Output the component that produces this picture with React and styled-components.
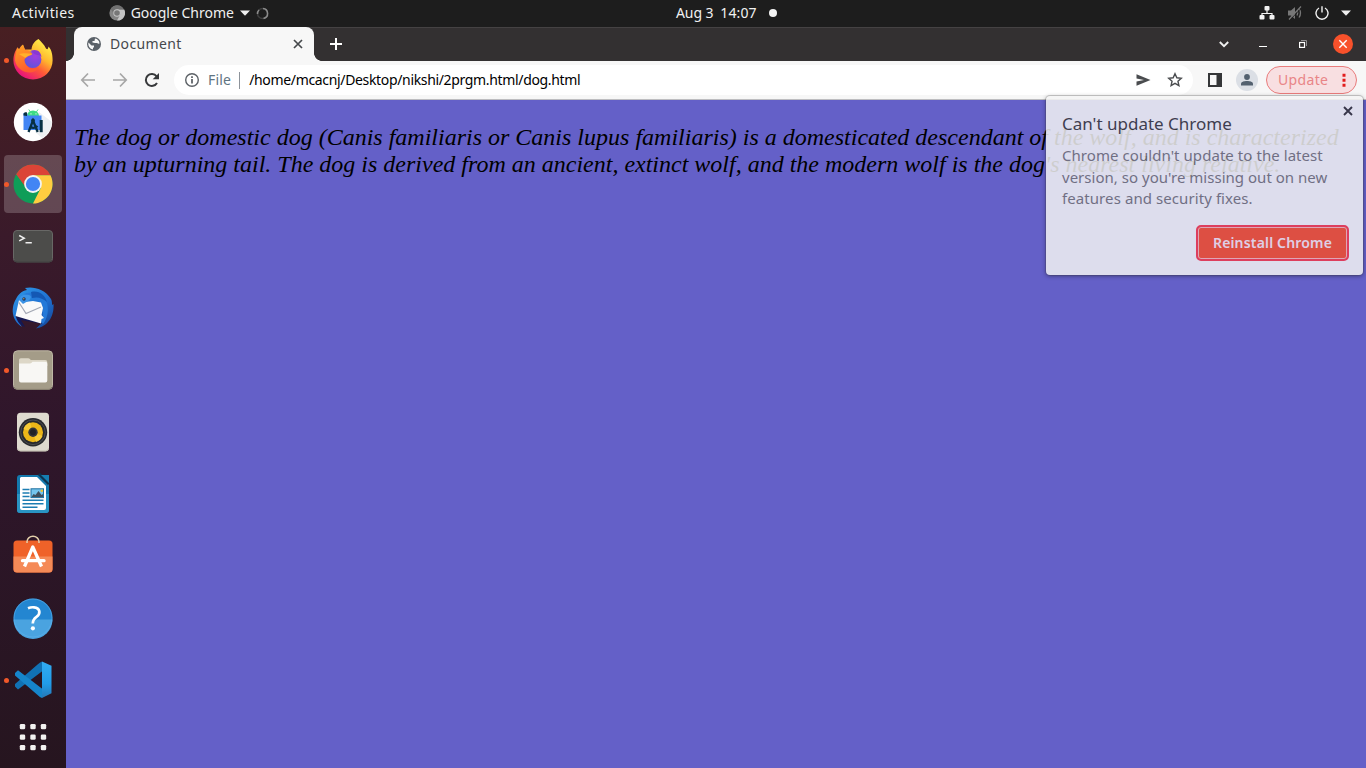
import React from 'react';
import styled, { createGlobalStyle } from 'styled-components';

const GlobalStyle = createGlobalStyle`
  * { box-sizing: border-box; }
  body { margin: 0; overflow: hidden; background: #1d1d1d; }
`;

const Desktop = styled.div`
  width: 1366px;
  height: 768px;
  display: grid;
  grid-template-rows: 27px 1fr;
  grid-template-columns: 66px 1fr;
  font-family: "Noto Sans", "Open Sans", sans-serif;
  font-size: 14px;
`;

const Icon = styled.svg`
  display: block;
  flex: none;
  width: ${(p) => p.$w}px;
  height: ${(p) => p.$h || p.$w}px;
`;

/* ---------- top panel ---------- */
const TopPanel = styled.header`
  grid-column: 1 / -1;
  display: grid;
  grid-template-columns: 676px auto 1fr;
  padding-bottom: 1px;
  background: #1d1d1d;
  color: #f0f0f0;
  line-height: 26px;
  white-space: nowrap;
`;
const PanelLeft = styled.div`
  display: flex;
  align-items: center;
  padding-left: 12px;
`;
const PanelLabel = styled.span`
  letter-spacing: ${(p) => p.$track || 0}px;
`;
const AppMenu = styled.div`
  display: flex;
  align-items: center;
  gap: 6px;
  margin-left: 34px;
`;
const Clock = styled.div`
  display: flex;
  align-items: center;
  gap: 7px;
`;
const NotifyDot = styled.i`
  width: 8px;
  height: 8px;
  margin-left: 5px;
  border-radius: 50%;
  background: #f4f4f4;
`;
const PanelRight = styled.div`
  display: flex;
  align-items: center;
  justify-content: flex-end;
  padding-right: 15px;
`;
const StatusSlot = styled.div`
  margin-left: ${(p) => p.$gap}px;
`;

/* ---------- dock ---------- */
const DockBar = styled.nav`
  display: flex;
  flex-direction: column;
  gap: 4px;
  padding: 4px 4px 0;
  background: linear-gradient(#481f22 0%, #3a1a2a 28%, #2f162b 55%, #26151f 100%);
`;
const DockItem = styled.div`
  display: flex;
  align-items: center;
  justify-content: flex-start;
  height: 58px;
  flex: none;
  border-radius: 4px;
  background: ${(p) => (p.$active ? 'rgba(255,255,255,0.2)' : 'transparent')};
  margin-top: ${(p) => p.$shift || 0}px;
`;
const RunningDot = styled.i`
  width: 5px;
  height: 5px;
  flex: none;
  border-radius: 50%;
  background: ${(p) => (p.$on ? '#f1582a' : 'transparent')};
`;
const DockIcon = styled(Icon)`
  margin-left: 2px;
`;

/* ---------- browser ---------- */
const BrowserWindow = styled.main`
  position: relative;
  display: grid;
  grid-template-rows: 34px 39px 1fr;
  min-width: 0;
`;
const TabStrip = styled.div`
  display: flex;
  align-items: flex-end;
  justify-content: space-between;
  background: #333031;
  box-shadow: inset 0 1px #454243;
`;
const TabGroup = styled.div`
  display: flex;
  align-items: center;
`;
const TabFoot = styled.div`
  width: 8px;
  height: 34px;
  background: radial-gradient(circle at ${(p) => (p.$right ? '100%' : '0')} 0, transparent 7.6px, #f7f7f7 8.2px) no-repeat 0 26px / 8px 8px;
`;
const Tab = styled.div`
  display: flex;
  align-items: center;
  width: 240px;
  height: 34px;
  padding: 0 11px 0 13px;
  border-radius: 8px 8px 0 0;
  background: #f7f7f7;
  color: #45484c;
`;
const TabTitle = styled.span`
  flex: 1;
  margin-left: 9px;
  padding-bottom: 1px;
  letter-spacing: 0.37px;
`;
const WindowControls = styled.div`
  display: flex;
  align-items: center;
  height: 34px;
  padding-right: 13px;
`;
const ControlSlot = styled.div`
  margin-left: ${(p) => p.$gap}px;
`;
const Toolbar = styled.div`
  display: flex;
  align-items: center;
  padding: 0 9px 0 14px;
  background: #f7f7f7;
  border-bottom: 1px solid #bdbdc0;
`;
const NavButtons = styled.div`
  display: flex;
  gap: 16px;
  margin-right: 14px;
`;
const Omnibox = styled.div`
  display: flex;
  align-items: center;
  flex: 1;
  height: 30px;
  padding: 0 10px;
  border-radius: 15px;
  background: #fff;
  white-space: nowrap;
`;
const Scheme = styled.span`
  margin-left: 8px;
  padding-right: 8px;
  border-right: 1px solid #8d939a;
  line-height: 16px;
  padding-bottom: 1px;
  letter-spacing: 0.2px;
  color: #5f7482;
`;
const Address = styled.span`
  flex: 1;
  margin-left: 9px;
  padding-bottom: 1px;
  letter-spacing: -0.34px;
  color: #000;
`;
const OmniActions = styled.div`
  display: flex;
  gap: 16px;
`;
const Avatar = styled.div`
  display: grid;
  place-items: center;
  width: 22px;
  height: 22px;
  margin: 0 8px 0 14px;
  border-radius: 50%;
  background: #dbdfe5;
`;
const UpdateChip = styled.div`
  display: flex;
  align-items: center;
  justify-content: space-between;
  width: 91px;
  height: 28px;
  padding: 0 10px 1px 11px;
  border: 1px solid #e97c7c;
  border-radius: 14px;
  background: #f8dfe1;
  color: #e98587;
  letter-spacing: 0.35px;
`;
const Page = styled.section`
  background: #6460c8;
  padding: 0 8px;
`;
const Paragraph = styled.p`
  margin: 24px 0 0;
  font: italic 24px/27px "Liberation Serif", serif;
  color: #000;
  white-space: nowrap;
`;

/* ---------- update bubble ---------- */
const Bubble = styled.aside`
  position: absolute;
  top: 69px;
  left: 980px;
  width: 317px;
  height: 179px;
  padding: 17px 14px 0 16px;
  border-radius: 4px;
  background: #f5f5f5;
  box-shadow: 0 0 0 1px rgba(60, 60, 60, 0.25), 0 1px 4px rgba(0, 0, 0, 0.5);
  opacity: 0.84;
  display: flex;
  flex-direction: column;
  white-space: nowrap;
`;
const BubbleTitle = styled.h2`
  margin: 0 0 10px;
  font-size: 17px;
  font-weight: 400;
  line-height: 22px;
  color: #383838;
`;
const BubbleLine = styled.div`
  font-size: 15px;
  line-height: 21.7px;
  letter-spacing: ${(p) => p.$track}px;
  color: #737377;
`;
const ReinstallButton = styled.button`
  align-self: flex-end;
  width: 153px;
  height: 36px;
  margin-top: 15px;
  padding: 0;
  border: 2px solid #f5384a;
  border-radius: 5px;
  background: #f54c2a;
  box-shadow: inset 0 0 0 1px #f7b3b3;
  color: #f6e4ec;
  font: 600 14px/30px "Noto Sans", sans-serif;
  letter-spacing: 0.17px;
`;
const BubbleClose = styled.div`
  position: absolute;
  top: 10px;
  right: 10px;
`;

/* ---------- dock drawings, on a 44-unit canvas ---------- */
const Firefox = () => (
  <DockIcon $w={44} viewBox="0 0 44 44">
    <defs>
      <linearGradient id="ffBody" x1=".85" y1=".1" x2=".25" y2=".95">
        <stop offset="0" stopColor="#fff14a" /><stop offset=".35" stopColor="#ffb72e" />
        <stop offset=".62" stopColor="#ff5a36" /><stop offset="1" stopColor="#e8127c" />
      </linearGradient>
      <radialGradient id="ffGlobe" cx=".65" cy=".3" r=".75">
        <stop offset="0" stopColor="#a43bdf" /><stop offset="1" stopColor="#5c55dc" />
      </radialGradient>
      <linearGradient id="ffHead" x1="0" y1="0" x2=".3" y2="1">
        <stop offset="0" stopColor="#ffa522" /><stop offset="1" stopColor="#ff5b30" />
      </linearGradient>
    </defs>
    <path d="M27.500 1C30 4 33 6 35 10.500C36.500 12 37 11 37.500 8.500C41 12 41.700 18 41.600 22.500A19.600 19 0 0 1 2.400 22.500C2.400 16 4.500 13 6.500 9L7.500 12C9 10 9.500 8 12 6.500L14 11.500L20.500 11.500C21 7 23 3.500 27.500 1Z" fill="url(#ffBody)" />
    <circle cx="21.800" cy="21.500" r="8.600" fill="url(#ffGlobe)" />
    <path d="M6.500 10L8.500 11L12 7L14 12C17 11.500 19 13.500 20 14.500C22 15.500 21.500 17 17.500 18C15.500 19 14 20 13.300 22C14 29 21 33 28 29.500C22 39 6 34 4 22.500C4 18 5 14 6.500 10Z" fill="url(#ffHead)" />
    <path d="M8 16C11 15 17 15 21.500 16C19 17.500 16 18 15 19.500C13.500 20 13.500 19 12 18.500Z" fill="#ffb12b" />
    <path d="M20 12.500C26 10.500 30 13.500 30.500 19C28.500 16.500 26.500 17.500 23.500 16C22.500 15 21.500 14 20 12.500Z" fill="#8a38d2" />
  </DockIcon>
);
const AndroidStudio = () => (
  <DockIcon $w={44} viewBox="0 0 44 44">
    <circle cx="22" cy="22" r="19.200" fill="#fff" />
    <path d="M28 12L41 22A19 19 0 0 1 31 38L24 32Z" fill="#edf0f2" />
    <path d="M16 16a6 5.600 0 0 1 12 0Z" fill="#3ddc84" />
    <path d="M17.800 9.500l2 3M27 9.500l-2 3" stroke="#3ddc84" strokeWidth=".9" />
    <circle cx="20" cy="13.800" r=".6" fill="#fff" /><circle cx="25" cy="13.800" r=".6" fill="#fff" />
    <path d="M12.500 13L16 13l1 2.500H30.500V30H12.500Z" fill="#4285f4" />
    <path d="M12.500 14C13 11.800 15 12 16 12.500V16L12.500 15.500Z" fill="#073042" />
    <path d="M17.500 32L22 20.500L26.700 32M18.500 26.500Q23 29.500 26.500 26" fill="none" stroke="#073042" strokeWidth="2.300" />
    <circle cx="22" cy="20.500" r="1.900" fill="#073042" /><path d="M28.700 20h3v12.200h-3z" fill="#073042" />
  </DockIcon>
);
const Chrome = () => (
  <DockIcon $w={44} viewBox="0 0 44 44">
    <circle cx="22" cy="22" r="19.500" fill="#0f9d58" />
    <path d="M22 22L14.500 25L5.113 12.250A19.500 19.500 0 0 1 39.500 13.300H22Z" fill="#db4437" />
    <path d="M22 41.500A19.500 19.500 0 0 0 39.500 13.300H22L29.700 26.300Z" fill="#ffcd40" />
    <circle cx="22" cy="22" r="8.900" fill="#f3f3f3" />
    <circle cx="22" cy="22" r="7.100" fill="#4285f4" />
  </DockIcon>
);
const Terminal = () => (
  <DockIcon $w={44} viewBox="0 0 44 44">
    <rect x="2.500" y="6.500" width="39" height="31.500" rx="3.500" fill="#4c4c4a" stroke="#686866" />
    <path d="M3 36.500q1 1.500 3 1.500h32q2 0 3-1.500" fill="none" stroke="#333" />
    <path d="M8.200 11.500l5 2.700l-5 2.700M14.500 18.700h6.300" fill="none" stroke="#f0f0f0" strokeWidth="1.500" />
  </DockIcon>
);
const Thunderbird = () => (
  <DockIcon $w={44} viewBox="0 0 44 44">
    <defs>
      <linearGradient id="tb" x1="0" y1="0" x2=".8" y2="1">
        <stop offset="0" stopColor="#2f9bea" /><stop offset=".6" stopColor="#1f6fd0" /><stop offset="1" stopColor="#164a9c" />
      </linearGradient>
    </defs>
    <path d="M5 13C0 21 0 34 11 41C9 38 8 36 9 33L31 37L25 42.500C36 41 43.500 31 42.500 18L41 19C41 17 41 15 40 13C34 3 22 0 14 2L16 4C10 5 7 9 5 13Z" fill="url(#tb)" />
    <path d="M4.500 29C6 36 9 39 14 41L10 34L32 38Q28 38 25 33Z" fill="#151852" />
    <path d="M13 8C20 5 31 8 35 15C39 23 36 33 32 38L28 33L32 30L31 17Z" fill="#2479d8" />
    <path d="M8 14L4.500 30L30 37.500L30.500 33L33 32L30.500 29L32 22L30 16.500L22 15L14 16Z" fill="#fafafa" />
    <path d="M8 16.500L15 27.500L30 21" fill="none" stroke="#a3a8b4" strokeWidth="1.200" />
    <path d="M8 14C9 9.500 13 8 18 9C21 10 20 13 17 15L12 18Z" fill="#3b93e6" />
    <path d="M20 6C28 4 34 9 36 16C31 12 27 10.500 21 12Z" fill="#1458b4" />
    <circle cx="13" cy="13" r="1.700" fill="#173461" /><circle cx="12.800" cy="12.800" r=".7" fill="#c89b50" />
  </DockIcon>
);
const Files = () => (
  <DockIcon $w={44} viewBox="0 0 44 44">
    <rect x="2.500" y="2.800" width="39" height="38.500" rx="4" fill="#a49c88" stroke="#beb7a5" />
    <path d="M3 39q1 2.300 3.500 2.300h31q2.500 0 3.500-2.300" fill="none" stroke="#817a68" />
    <path d="M8 12a1.800 1.800 0 0 1 1.800-1.800h7.500q1.500 0 2.500 1.700h14.500a2 2 0 0 1 2 2V18H8Z" fill="#ddd7c7" />
    <path d="M8 15.500h11q1.500 0 2.500-1.800h12.800a2 2 0 0 1 2 2v16.800a2 2 0 0 1-2 2H10a2 2 0 0 1-2-2Z" fill="#f8f7f4" />
  </DockIcon>
);
const Rhythmbox = () => (
  <DockIcon $w={44} viewBox="0 0 44 44">
    <rect x="6" y="2.800" width="32" height="38.500" rx="3.500" fill="#dedacf" />
    <path d="M6.500 39q1 2 3 2h25q2 0 3-2" fill="none" stroke="#bdb8ab" />
    <circle cx="22" cy="22.300" r="14.200" fill="#282a2e" />
    <circle cx="22" cy="22.300" r="12.300" fill="none" stroke="#4c4e52" strokeWidth="1" />
    <circle cx="22" cy="22.300" r="10" fill="#ecb718" />
    <path d="M22 22.300L12.500 19A10 10 0 0 1 19 12.500ZM22 22.300L31.500 26A10 10 0 0 1 25 32Z" fill="#f6ca35" />
    <circle cx="22" cy="22.300" r="4.700" fill="#34363a" /><circle cx="22" cy="22.300" r="3" fill="#202226" />
  </DockIcon>
);
const Writer = () => (
  <DockIcon $w={44} viewBox="0 0 44 44">
    <path d="M9 3H28L38 11V38a3 3 0 0 1-3 3H9a3 3 0 0 1-3-3V6a3 3 0 0 1 3-3Z" fill="#1379ad" />
    <path d="M6 22H38V38a3 3 0 0 1-3 3H9a3 3 0 0 1-3-3Z" fill="#2994c3" />
    <path d="M10 5H26L35 14V36a2 2 0 0 1-2 2H11a2 2 0 0 1-2-2V6Z" fill="#fff" />
    <path d="M28 2L38 12" stroke="#0d3450" strokeWidth="3" /><path d="M30 3H38V11Z" fill="#157eb1" />
    <path d="M11.500 17.500h7M11.500 21h7M11.500 24.500h7M11.500 28.300h21M11.500 31.800h21M11.500 35.200h15" stroke="#1c7db2" strokeWidth="1.400" />
    <rect x="20" y="16.800" width="12.500" height="8.800" fill="#75c5ed" stroke="#1c6f9f" />
    <path d="M20.500 25l2-3l2 1l3-4l3 4l1.500-1v3Z" fill="#40505d" /><circle cx="30.800" cy="18.700" r="1.300" fill="#ecc532" />
  </DockIcon>
);
const Software = () => (
  <DockIcon $w={44} viewBox="0 0 44 44">
    <rect x="2.500" y="6.500" width="39" height="32" rx="3.500" fill="#ef6229" />
    <path d="M2.500 22.500h39v12.500a3.500 3.500 0 0 1-3.500 3.500H6a3.500 3.500 0 0 1-3.500-3.500Z" fill="#f58a57" />
    <path d="M16 9V7.800a6 5.500 0 0 1 12 0v1.200" fill="none" stroke="#e3cfaa" strokeWidth="1.500" />
    <path d="M13.500 32.500L21.800 13L30.500 32.500" fill="none" stroke="#fff" strokeWidth="3.300" strokeLinejoin="round" />
    <path d="M11.500 26.700h21.500" stroke="#fff" strokeWidth="3.300" strokeLinecap="round" />
  </DockIcon>
);
const Help = () => (
  <DockIcon $w={44} viewBox="0 0 44 44">
    <circle cx="22" cy="22" r="19.500" fill="#2386d1" />
    <path d="M2.500 23.500h39a19.500 19.500 0 0 1-39 0Z" fill="#4aa3e0" />
    <circle cx="22" cy="22" r="19" fill="none" stroke="#62b3eb" strokeWidth=".8" opacity=".7" />
    <path d="M17 12.200Q20 11 23 11.300C29.500 12 29.800 18 25.500 20.800Q21.800 23.300 21.800 27.500" fill="none" stroke="#fff" strokeWidth="2.700" />
    <circle cx="21.900" cy="32.300" r="2.100" fill="#fff" />
  </DockIcon>
);
const VSCode = () => (
  <DockIcon $w={44} viewBox="0 0 44 44">
    <defs>
      <linearGradient id="vsFin" x1="0" y1="0" x2="0" y2="1"><stop offset="0" stopColor="#32acf2" /><stop offset=".6" stopColor="#219cea" /><stop offset="1" stopColor="#2577b5" /></linearGradient>
    </defs>
    <path d="M4 28.500L7 31.500L31.500 13L31 3.500Q29 4 26 7L4 26Z" fill="#1171b4" />
    <path d="M4 15L7 12.300L31.500 31L31 40Q29 39.500 26 36.500L4 17.500Z" fill="#1685cb" />
    <path d="M31 3.500L40.500 7.800V35.300L31 40Z" fill="url(#vsFin)" />
  </DockIcon>
);
const AppGrid = () => (
  <DockIcon $w={44} viewBox="0 0 44 44">
    {[0, 1, 2].map((r) => [0, 1, 2].map((c) => (
      <rect key={`${r}${c}`} x={8.8 + c * 10.5} y={8.9 + r * 10.5} width="5.400" height="5.400" rx="1.400" fill="#f3f1f0" />
    )))}
  </DockIcon>
);

const DOCK = [
  { art: Firefox, on: true },
  { art: AndroidStudio },
  { art: Chrome, on: true, active: true },
  { art: Terminal },
  { art: Thunderbird },
  { art: Files, on: true },
  { art: Rhythmbox },
  { art: Writer },
  { art: Software },
  { art: Help },
  { art: VSCode, on: true },
  { art: AppGrid, shift: -5 },
];

const Cross = ({ size, color, width }) => (
  <Icon $w={size} viewBox="0 0 10 10">
    <path d="M1 1l8 8M9 1l-8 8" stroke={color} strokeWidth={width} />
  </Icon>
);

function SystemPanel() {
  return (
    <TopPanel>
      <PanelLeft>
        <PanelLabel $track={0.43}>Activities</PanelLabel>
        <AppMenu>
          <Icon $w={16} viewBox="0 0 16 16">
            <circle cx="8" cy="8" r="7.600" fill="#858585" />
            <path d="M8 4.500h7.200A7.600 7.600 0 0 1 8 15.600L11.300 9.500Z" fill="#c4c4c4" />
            <path d="M8 4.500H15A7.600 7.600 0 0 0 1.700 3.900L5 9Z" fill="#707070" />
            <circle cx="8" cy="8" r="3.700" fill="#c8c8c8" /><circle cx="8" cy="8" r="2.800" fill="#777" />
          </Icon>
          <PanelLabel $track={0}>Google Chrome</PanelLabel>
          <Icon $w={10} $h={6} viewBox="0 0 10 6"><path d="M0 .5h10L5 5.800Z" fill="#f0f0f0" /></Icon>
          <Icon $w={13} viewBox="0 0 13 13">
            <circle cx="6.500" cy="6.500" r="5" fill="none" stroke="#3e3e3e" strokeWidth="1.500" />
            <path d="M7 1.500A5 5 0 0 1 7.500 11.400M1.500 7A5 5 0 0 1 3 3" fill="none" stroke="#8b8b8b" strokeWidth="1.500" />
          </Icon>
        </AppMenu>
      </PanelLeft>
      <Clock>
        <PanelLabel $track={-0.1}>Aug 3</PanelLabel>
        <PanelLabel $track={0.1}>14:07</PanelLabel>
        <NotifyDot />
      </Clock>
      <PanelRight>
        <StatusSlot $gap={0}>
          <Icon $w={16} viewBox="0 0 16 16">
            <path d="M8 5v3M3 11V8.500h10V11" fill="none" stroke="#f2f2f2" strokeWidth="1.200" />
            <rect x="5.500" y="1" width="5" height="4.500" rx="1" fill="#f2f2f2" />
            <rect x=".5" y="10" width="5" height="4.500" rx="1" fill="#f2f2f2" />
            <rect x="10.500" y="10" width="5" height="4.500" rx="1" fill="#f2f2f2" />
          </Icon>
        </StatusSlot>
        <StatusSlot $gap={12}>
          <Icon $w={16} viewBox="0 0 16 16">
            <path d="M1 5.500h3L8 2v12l-4-3.500H1Z" fill="#777" />
            <path d="M10 5.500q1.500 2.500 0 5M12 3.500q3 4.500 0 9M2 14.500L14 1.500" fill="none" stroke="#777" strokeWidth="1.300" />
            <path d="M3 15L15 2.500" stroke="#1d1d1d" strokeWidth=".8" />
          </Icon>
        </StatusSlot>
        <StatusSlot $gap={12}>
          <Icon $w={14} viewBox="0 0 14 14">
            <path d="M4 2A6 6 0 1 0 10 2M7 .3v6.200" fill="none" stroke="#f2f2f2" strokeWidth="1.400" />
          </Icon>
        </StatusSlot>
        <StatusSlot $gap={12}>
          <Icon $w={10} $h={6} viewBox="0 0 10 6"><path d="M0 .5h10L5 5.800Z" fill="#f0f0f0" /></Icon>
        </StatusSlot>
      </PanelRight>
    </TopPanel>
  );
}

function Dock() {
  return (
    <DockBar>
      {DOCK.map(({ art: Art, on, active, shift }, i) => (
        <DockItem key={i} $active={active} $shift={shift}>
          <RunningDot $on={on} />
          <Art />
        </DockItem>
      ))}
    </DockBar>
  );
}

function Tabs() {
  return (
    <TabStrip>
      <TabGroup>
        <TabFoot />
        <Tab>
          <Icon $w={14} viewBox="0 0 14 14">
            <circle cx="7" cy="7" r="7" fill="#5a6168" />
            <path d="M1.500 5.500L4.500 8.500H7V10.500H6V12.600A5.700 5.700 0 0 1 1.500 5.500ZM8 1.500A5.600 5.600 0 0 1 12.500 6.500Q11.500 7 10 6H8L5.500 5.500V4H7.500Z" fill="#f7f7f7" />
          </Icon>
          <TabTitle>Document</TabTitle>
          <Cross size={10} color="#45484b" width={1.7} />
        </Tab>
        <TabFoot $right />
        <ControlSlot $gap={8}>
          <Icon $w={12} viewBox="0 0 12 12"><path d="M6 0v12M0 6h12" stroke="#fff" strokeWidth="2" /></Icon>
        </ControlSlot>
      </TabGroup>
      <WindowControls>
        <ControlSlot $gap={0}>
          <Icon $w={10} viewBox="0 0 10 10"><path d="M.8 3l4.200 4.200L9.200 3" fill="none" stroke="#f0f0f0" strokeWidth="1.900" /></Icon>
        </ControlSlot>
        <ControlSlot $gap={30}>
          <Icon $w={8} viewBox="0 0 8 8"><path d="M0 6.500h8" stroke="#fff" strokeWidth="1" /></Icon>
        </ControlSlot>
        <ControlSlot $gap={32}>
          <Icon $w={8} viewBox="0 0 8 8">
            <path d="M2 .5h5.500V6" fill="none" stroke="#929092" /><rect x=".6" y="2.500" width="4.900" height="4.900" fill="none" stroke="#fff" strokeWidth="1.200" />
          </Icon>
        </ControlSlot>
        <ControlSlot $gap={26}>
          <Icon $w={20} viewBox="0 0 20 20">
            <circle cx="10" cy="10" r="10" fill="#f8512b" /><path d="M6.300 6.300l7.400 7.400M13.700 6.300l-7.400 7.400" stroke="#fff" strokeWidth="1.400" />
          </Icon>
        </ControlSlot>
      </WindowControls>
    </TabStrip>
  );
}

function AddressBar() {
  return (
    <Toolbar>
      <NavButtons>
        <Icon $w={16} viewBox="0 0 16 16"><path d="M15 8H2M8 1.500L1.800 8L8 14.500" fill="none" stroke="#a7a7a7" strokeWidth="1.700" /></Icon>
        <Icon $w={16} viewBox="0 0 16 16"><path d="M1 8h13M8 1.500L14.200 8L8 14.500" fill="none" stroke="#a7a7a7" strokeWidth="1.700" /></Icon>
        <Icon $w={16} viewBox="0 0 16 16">
          <path d="M13 11A6 6 0 1 1 12.600 4.300" fill="none" stroke="#37393b" strokeWidth="2" /><path d="M15 1v6.300H8.700Z" fill="#37393b" />
        </Icon>
      </NavButtons>
      <Omnibox>
        <Icon $w={16} viewBox="0 0 16 16">
          <circle cx="8" cy="8" r="6.300" fill="none" stroke="#5c6166" strokeWidth="1.400" /><path d="M8 7v4.500M8 4.300v1.600" stroke="#4d5257" strokeWidth="1.600" />
        </Icon>
        <Scheme>File</Scheme>
        <Address>/home/mcacnj/Desktop/nikshi/2prgm.html/dog.html</Address>
        <OmniActions>
          <Icon $w={16} viewBox="0 0 16 16"><path d="M1.500 2.200L15.500 8L1.500 13.800V9.600L9 8L1.500 6.400Z" fill="#4a4c4f" /></Icon>
          <Icon $w={16} viewBox="0 0 16 16">
            <path d="M8 1.700l1.850 4.100 4.450.45-3.350 3 .95 4.400L8 11.350l-3.900 2.300.95-4.400-3.350-3 4.450-.45Z" fill="none" stroke="#4a4c4f" strokeWidth="1.400" />
          </Icon>
        </OmniActions>
      </Omnibox>
      <ControlSlot $gap={15}>
        <Icon $w={14} viewBox="0 0 14 14"><path d="M0 0h14v14H0ZM2 2v10h6.500V2Z" fill="#353638" fillRule="evenodd" /></Icon>
      </ControlSlot>
      <Avatar>
        <Icon $w={14} viewBox="0 0 14 14"><circle cx="7" cy="4" r="2.900" fill="#53616f" /><path d="M1 12.500V11C1 8.800 4 8 7 8s6 .8 6 3v1.500Z" fill="#53616f" /></Icon>
      </Avatar>
      <UpdateChip>
        Update
        <Icon $w={4} $h={14} viewBox="0 0 4 14"><path d="M.5 .8h3v3h-3zM.5 5.800h3v3h-3zM.5 10.800h3v3h-3z" fill="#e21d1d" /></Icon>
      </UpdateChip>
    </Toolbar>
  );
}

export default function App() {
  return (
    <Desktop>
      <GlobalStyle />
      <SystemPanel />
      <Dock />
      <BrowserWindow>
        <Tabs />
        <AddressBar />
        <Page>
          <Paragraph>
            The dog or domestic dog (Canis familiaris or Canis lupus familiaris) is a domesticated descendant of the wolf, and is characterized
            <br />
            by an upturning tail. The dog is derived from an ancient, extinct wolf, and the modern wolf is the dog's nearest living relative.
          </Paragraph>
        </Page>
        <Bubble>
          <BubbleTitle>Can't update Chrome</BubbleTitle>
          <BubbleLine $track={0.06}>Chrome couldn't update to the latest</BubbleLine>
          <BubbleLine $track={0.02}>version, so you're missing out on new</BubbleLine>
          <BubbleLine $track={0.08}>features and security fixes.</BubbleLine>
          <ReinstallButton>Reinstall Chrome</ReinstallButton>
          <BubbleClose><Cross size={10} color="#2f2f33" width={1.9} /></BubbleClose>
        </Bubble>
      </BrowserWindow>
    </Desktop>
  );
}
